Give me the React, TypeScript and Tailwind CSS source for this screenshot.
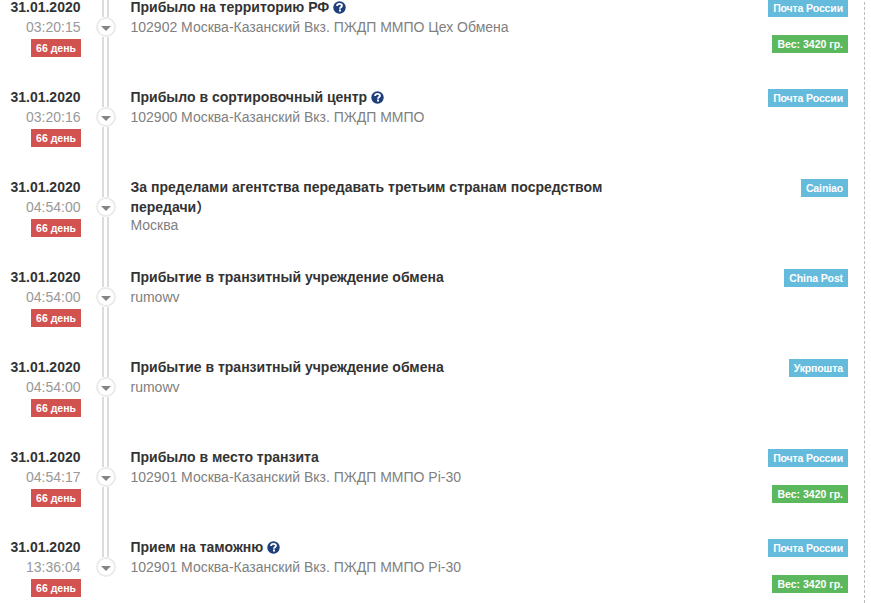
import type { ReactNode } from 'react';

interface TrackingEvent {
  date: string;
  time: string;
  title: string;
  place: string;
  carrier: string;
  weight?: string;
  hint?: boolean;
  long?: boolean;
}

const events: TrackingEvent[] = [
  { date: '31.01.2020', time: '03:20:15', title: 'Прибыло на территорию РФ', place: '102902 Москва-Казанский Вкз. ПЖДП ММПО Цех Обмена', carrier: 'Почта России', weight: 'Вес: 3420 гр.', hint: true },
  { date: '31.01.2020', time: '03:20:16', title: 'Прибыло в сортировочный центр', place: '102900 Москва-Казанский Вкз. ПЖДП ММПО', carrier: 'Почта России', hint: true },
  { date: '31.01.2020', time: '04:54:00', title: 'За пределами агентства передавать третьим странам посредством передачи）', place: 'Москва', carrier: 'Cainiao', long: true },
  { date: '31.01.2020', time: '04:54:00', title: 'Прибытие в транзитный учреждение обмена', place: 'rumowv', carrier: 'China Post' },
  { date: '31.01.2020', time: '04:54:00', title: 'Прибытие в транзитный учреждение обмена', place: 'rumowv', carrier: 'Укрпошта' },
  { date: '31.01.2020', time: '04:54:17', title: 'Прибыло в место транзита', place: '102901 Москва-Казанский Вкз. ПЖДП ММПО Pi-30', carrier: 'Почта России', weight: 'Вес: 3420 гр.' },
  { date: '31.01.2020', time: '13:36:04', title: 'Прием на таможню', place: '102901 Москва-Казанский Вкз. ПЖДП ММПО Pi-30', carrier: 'Почта России', weight: 'Вес: 3420 гр.', hint: true },
];

const Label = ({ color, children }: { color: string; children: ReactNode }) => (
  <span className={`flex h-[18px] items-center whitespace-nowrap px-[5px] text-[10.5px] font-bold leading-none text-white ${color}`}>
    {children}
  </span>
);

const HintIcon = () => (
  <svg width="13" height="13" viewBox="0 0 13 13" className="ml-1 inline-block align-[-2px]">
    <circle cx="6.5" cy="6.5" r="6.2" fill="#1f3f7a" />
    <path d="M4.1 5.1C4.1 3.5 5.1 2.9 6.5 2.9s2.4.7 2.4 1.9c0 1.5-1.9 1.5-1.9 2.9" fill="none" stroke="#fff" strokeWidth="1.9" />
    <path d="M6 8.6h2v1.8H6z" fill="#fff" />
  </svg>
);

const Marker = ({ last }: { last: boolean }) => (
  <div className="flex h-full w-5 flex-col">
    <div className="ml-[6px] h-5 w-[7px] border-x-2 border-[#dcdcdf]" />
    <div className="flex h-5 w-5 items-center justify-center rounded-full border-2 border-[#ebebec] bg-white">
      <svg width="10" height="5" viewBox="0 0 10 5" className="mt-[3px]">
        <path d="M0 0h10L5 5z" fill="#858585" />
      </svg>
    </div>
    {!last && <div className="ml-[6px] w-[7px] flex-1 border-x-2 border-[#dcdcdf]" />}
  </div>
);

const EventRow = ({ event, last }: { event: TrackingEvent; last: boolean }) => (
  <li className="flex h-[90px] leading-5">
    <div className="flex w-[81px] flex-col items-end">
      <span className="pr-[0.5px] font-bold text-[#333]">{event.date}</span>
      <span className="mb-[2px] pr-[0.5px] text-[#999]">{event.time}</span>
      <Label color="bg-[#d2524f]">66 день</Label>
    </div>
    <div className="ml-[15px]">
      <Marker last={last} />
    </div>
    <div className="ml-[14.5px] w-[500px]">
      <h3 className="font-bold text-[#333]">
        {event.title}
        {event.hint && <HintIcon />}
      </h3>
      <p className={event.long ? '-mt-[2px] text-[#808080]' : 'text-[#808080]'}>{event.place}</p>
    </div>
    <div className="ml-auto mr-4 flex flex-col items-end gap-[18px] pt-[2px]">
      <Label color="bg-[#65bbdc] tracking-[-0.12px]">{event.carrier}</Label>
      {event.weight && <Label color="bg-[#5cb85c]">{event.weight}</Label>}
    </div>
  </li>
);

export default function App() {
  return (
    <div className="h-[603px] w-[871px] overflow-hidden bg-white font-['Liberation_Sans','Noto_Sans_CJK_SC',sans-serif] text-sm">
      <ul className="-mt-[3px] h-[606px] w-[865px] border-r border-dashed border-[#bbb]">
        {events.map((event, i) => (
          <EventRow key={i} event={event} last={i === events.length - 1} />
        ))}
      </ul>
    </div>
  );
}
